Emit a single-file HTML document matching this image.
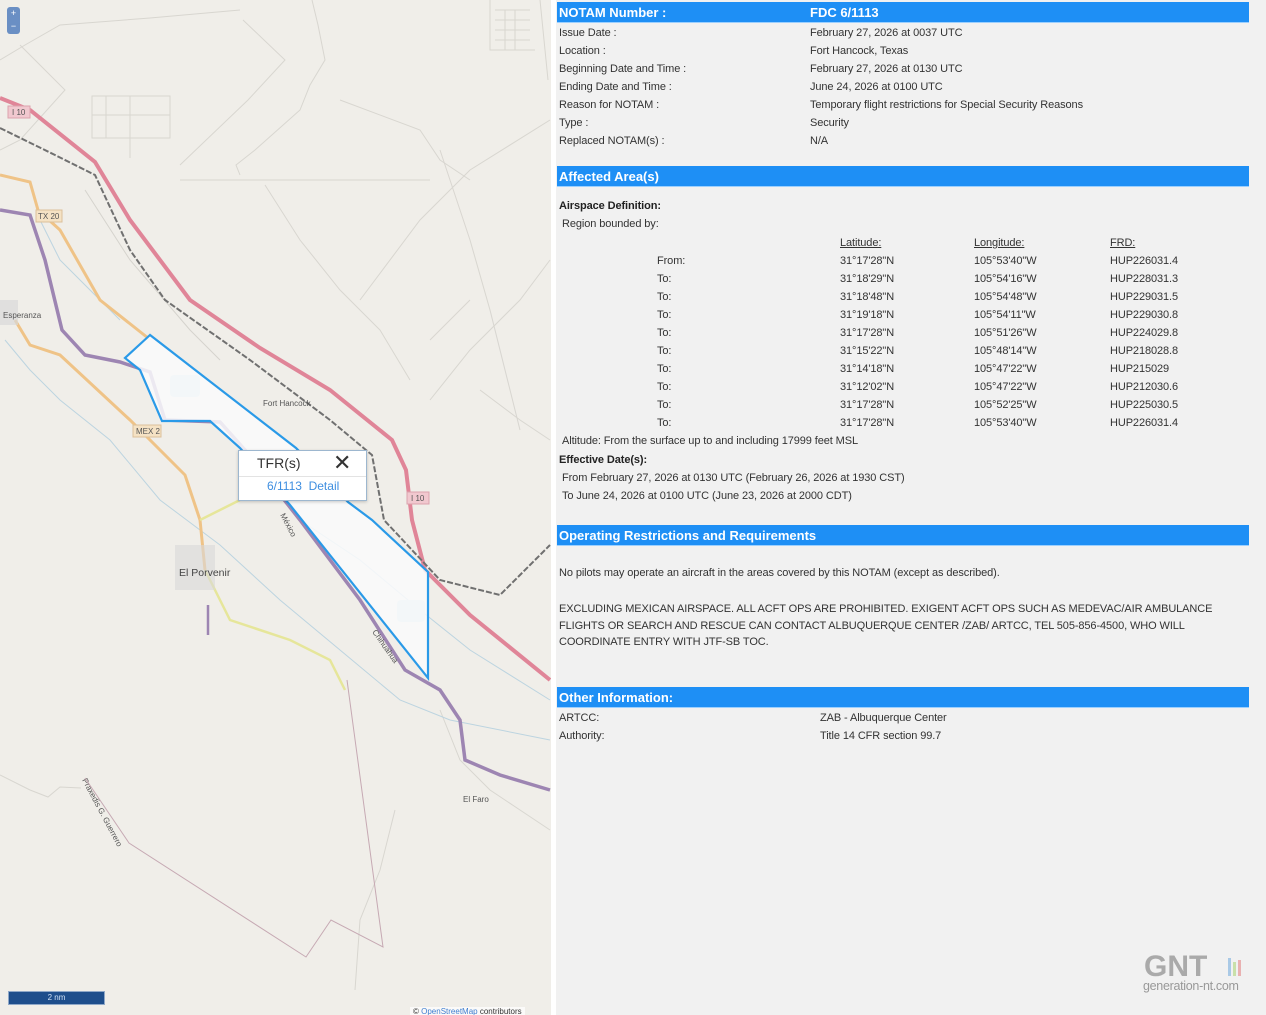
<!DOCTYPE html>
<html><head><meta charset="utf-8"><style>
*{margin:0;padding:0;box-sizing:border-box}
body{width:1266px;height:1015px;overflow:hidden;background:#f1f1f1;font-family:"Liberation Sans",sans-serif;position:relative}
#map{position:absolute;left:0;top:0;width:551px;height:1015px;background:#f0eee9;overflow:hidden}
#div{position:absolute;left:551px;top:0;width:5px;height:1015px;background:#fff}
.t{position:absolute;font-size:11px;color:#333;white-space:nowrap;letter-spacing:-0.1px;margin-top:1px}
.bar{position:absolute;left:557px;width:692px;height:21px;background:#1e8ff5;color:#fff;font-weight:bold;font-size:13px;line-height:21px;padding-left:2px;border-bottom:1px solid #9cd0ff}
.b{font-weight:bold;color:#222}
.u{text-decoration:underline}
</style></head><body>
<div id="map">
<svg width="551" height="1015" viewBox="0 0 551 1015" xmlns="http://www.w3.org/2000/svg">
<g fill="none" stroke="#d8d6d0" stroke-width="1">
<path d="M0 60 L25 45 L60 25 L150 18 L240 10"/>
<path d="M20 45 L65 90 L20 140 L0 150"/>
<path d="M92 96 H170 V138 H92 Z M92 115 H170 M106 96 V138 M130 96 V158"/>
<path d="M243 20 L285 60 L248 100 L180 165"/>
<path d="M312 0 L318 25 L325 60 L310 85 L300 110 L255 150 L236 165 L240 175"/>
<path d="M180 180 L430 180 M340 100 L420 130 L440 160 L470 180"/>
<path d="M265 185 L300 240 L340 290 L380 330 L410 380"/>
<path d="M550 120 L470 170 L420 220 L360 300 M440 150 L470 240 L490 310 L520 430"/>
<path d="M490 0 V50 H535 M495 10 H530 M495 20 H530 M495 30 H530 M495 40 H530 M505 10 V50 M515 10 V50"/>
<path d="M540 0 L548 80"/>
<path d="M430 400 L470 350 L520 300 L550 260"/>
<path d="M430 340 L470 300 M480 390 L520 420 L550 440"/>
<path d="M0 775 L30 790 L48 797 L60 787 L81 788"/>
<path d="M395 810 L380 870 L360 920 L355 990"/>
<path d="M440 710 L460 760 L490 790 L520 810 L550 830"/>
</g>
<path d="M85 190 L130 260 L190 330 L220 360" stroke="#d5d3cd" fill="none"/>
<g fill="none" stroke="#bcd4e0" stroke-width="1">
<path d="M5 340 L30 370 L60 400 L110 440 L160 500 L220 545 L280 600 L340 650 L400 700 L450 720 L550 740"/>
<path d="M40 220 L60 260 L100 300 L120 320"/>
<path d="M300 520 L360 560 L420 610 L470 650 L550 700"/>
</g>
<path d="M0 98 L30 110 L95 162 L130 220 L190 300 L260 348 L330 390 L392 440 L406 470 L412 520 L425 570 L470 615 L550 680" stroke="#e08598" stroke-width="4" fill="none"/>
<path d="M0 128 L55 155 L95 175 L130 250 L165 300 L250 360 L330 420 L372 455 L384 520 L440 580 L500 595 L530 565 L550 545" stroke="#707070" stroke-width="2" stroke-dasharray="6 2" fill="none"/>
<path d="M0 175 L30 182 L38 210 L60 230 L100 300 L148 338" stroke="#efc387" stroke-width="3" fill="none"/>
<path d="M15 320 L30 345 L60 355 L130 420 L185 475 L200 520 L205 570" stroke="#efc387" stroke-width="3" fill="none"/>
<path d="M205 570 L230 620 L290 640 L330 660 L345 690" stroke="#e6e69a" stroke-width="2.5" fill="none"/>
<path d="M200 520 L240 500" stroke="#e6e69a" stroke-width="2.5" fill="none"/>
<path d="M0 210 L30 215 L45 260 L62 330 L85 355 L120 362 L150 372 L165 420 L220 422 L245 450 L300 520 L360 600 L405 670 L440 690 L460 720 L465 760 L500 775 L550 790" stroke="#9d85b2" stroke-width="3.5" fill="none"/>
<path d="M208 605 V635" stroke="#9d85b2" stroke-width="2.5"/>
<rect x="170" y="375" width="30" height="22" fill="#c9e2ec" rx="4"/>
<rect x="397" y="600" width="28" height="22" fill="#c9e2ec" rx="4"/>
<rect x="175" y="545" width="40" height="45" fill="#d9d9d9" opacity=".6"/>
<rect x="0" y="300" width="18" height="25" fill="#d9d9d9" opacity=".7"/>
<path d="M150 335 L125 358 L140 370 L162 421 L210 421 L240 448 L290 505 L428 678 L428 572 L372 520 L348 502 L296 448 Z" fill="#fafafb" fill-opacity=".85" stroke="#2a9ae8" stroke-width="2.2"/>
<g font-family="Liberation Sans,sans-serif" fill="#555">
<text x="3" y="318" font-size="8">Esperanza</text>
<text x="263" y="406" font-size="8">Fort Hancock</text>
<text x="179" y="576" font-size="10.5" fill="#444">El Porvenir</text>
<text x="463" y="802" font-size="8">El Faro</text>
<text font-size="8" transform="translate(280,515) rotate(62)">México</text>
<text font-size="8" transform="translate(372,632) rotate(55)">Chihuahua</text>
<text font-size="8" transform="translate(82,780) rotate(62)">Praxedis G. Guerrero</text>
</g>
<g font-family="Liberation Sans,sans-serif" font-size="8" fill="#555">
<rect x="8" y="106" width="22" height="12" fill="#f1c8cf" stroke="#dba2ad"/><text x="12" y="115">I 10</text>
<rect x="36" y="210" width="26" height="12" fill="#f5e2c4" stroke="#dcc09a"/><text x="38" y="219">TX 20</text>
<rect x="133" y="425" width="28" height="12" fill="#f5e2c4" stroke="#dcc09a"/><text x="136" y="434">MEX 2</text>
<rect x="407" y="492" width="22" height="12" fill="#f1c8cf" stroke="#dba2ad"/><text x="411" y="501">I 10</text>
</g>
<path d="M85 778 L129 843 L306 957 L331 920 L383 947 L347 680" stroke="#c6a9b3" fill="none"/>
</svg>
<div style="position:absolute;left:7px;top:7px;width:13px;height:27px;background:#6a8fc4;border-radius:3px;color:#fff;font-size:9px;text-align:center;line-height:13px">+<br>−</div>
<div style="position:absolute;left:238px;top:450px;width:129px;height:51px;background:#fff;border:1px solid #9db7cf;box-shadow:0 1px 3px rgba(0,0,0,.2)">
<div style="position:absolute;left:18px;top:4px;font-size:14px;color:#333">TFR(s)</div>
<div style="position:absolute;left:94px;top:0px;font-size:22px;color:#333;line-height:24px">✕</div>
<div style="position:absolute;left:0;top:25px;width:127px;border-top:1px solid #e3e3e3"></div>
<div style="position:absolute;left:28px;top:28px;font-size:12px;color:#3e8ee0">6/1113&nbsp; Detail</div>
</div>
<div style="position:absolute;left:8px;top:991px;width:97px;height:14px;background:#1e4e8c;border:1px solid #8fa8c8;color:#cfe0f5;font-size:8px;text-align:center;line-height:12px">2 nm</div>
<div style="position:absolute;left:410px;top:1007px;font-size:8px;color:#333;background:rgba(255,255,255,.7);padding:0 3px">© <span style="color:#3e7ed0">OpenStreetMap</span> contributors</div>
</div>
<div id="div"></div>

<div class="bar" style="top:2px">NOTAM Number :<span style="position:absolute;left:253px">FDC 6/1113</span></div>
<div class="t" style="left:559px;top:26px">Issue Date :</div><div class="t" style="left:810px;top:26px">February 27, 2026 at 0037 UTC</div>
<div class="t" style="left:559px;top:44px">Location :</div><div class="t" style="left:810px;top:44px">Fort Hancock, Texas</div>
<div class="t" style="left:559px;top:62px">Beginning Date and Time :</div><div class="t" style="left:810px;top:62px">February 27, 2026 at 0130 UTC</div>
<div class="t" style="left:559px;top:80px">Ending Date and Time :</div><div class="t" style="left:810px;top:80px">June 24, 2026 at 0100 UTC</div>
<div class="t" style="left:559px;top:98px">Reason for NOTAM :</div><div class="t" style="left:810px;top:98px">Temporary flight restrictions for Special Security Reasons</div>
<div class="t" style="left:559px;top:116px">Type :</div><div class="t" style="left:810px;top:116px">Security</div>
<div class="t" style="left:559px;top:134px">Replaced NOTAM(s) :</div><div class="t" style="left:810px;top:134px">N/A</div>

<div class="bar" style="top:166px">Affected Area(s)</div>
<div class="t b" style="left:559px;top:199px">Airspace Definition:</div>
<div class="t" style="left:562px;top:217px">Region bounded by:</div>
<div class="t u" style="left:840px;top:236px">Latitude:</div><div class="t u" style="left:974px;top:236px">Longitude:</div><div class="t u" style="left:1110px;top:236px">FRD:</div>
<div class="t" style="left:657px;top:254px">From:</div><div class="t" style="left:840px;top:254px">31°17'28"N</div><div class="t" style="left:974px;top:254px">105°53'40"W</div><div class="t" style="left:1110px;top:254px">HUP226031.4</div>
<div class="t" style="left:657px;top:272px">To:</div><div class="t" style="left:840px;top:272px">31°18'29"N</div><div class="t" style="left:974px;top:272px">105°54'16"W</div><div class="t" style="left:1110px;top:272px">HUP228031.3</div>
<div class="t" style="left:657px;top:290px">To:</div><div class="t" style="left:840px;top:290px">31°18'48"N</div><div class="t" style="left:974px;top:290px">105°54'48"W</div><div class="t" style="left:1110px;top:290px">HUP229031.5</div>
<div class="t" style="left:657px;top:308px">To:</div><div class="t" style="left:840px;top:308px">31°19'18"N</div><div class="t" style="left:974px;top:308px">105°54'11"W</div><div class="t" style="left:1110px;top:308px">HUP229030.8</div>
<div class="t" style="left:657px;top:326px">To:</div><div class="t" style="left:840px;top:326px">31°17'28"N</div><div class="t" style="left:974px;top:326px">105°51'26"W</div><div class="t" style="left:1110px;top:326px">HUP224029.8</div>
<div class="t" style="left:657px;top:344px">To:</div><div class="t" style="left:840px;top:344px">31°15'22"N</div><div class="t" style="left:974px;top:344px">105°48'14"W</div><div class="t" style="left:1110px;top:344px">HUP218028.8</div>
<div class="t" style="left:657px;top:362px">To:</div><div class="t" style="left:840px;top:362px">31°14'18"N</div><div class="t" style="left:974px;top:362px">105°47'22"W</div><div class="t" style="left:1110px;top:362px">HUP215029</div>
<div class="t" style="left:657px;top:380px">To:</div><div class="t" style="left:840px;top:380px">31°12'02"N</div><div class="t" style="left:974px;top:380px">105°47'22"W</div><div class="t" style="left:1110px;top:380px">HUP212030.6</div>
<div class="t" style="left:657px;top:398px">To:</div><div class="t" style="left:840px;top:398px">31°17'28"N</div><div class="t" style="left:974px;top:398px">105°52'25"W</div><div class="t" style="left:1110px;top:398px">HUP225030.5</div>
<div class="t" style="left:657px;top:416px">To:</div><div class="t" style="left:840px;top:416px">31°17'28"N</div><div class="t" style="left:974px;top:416px">105°53'40"W</div><div class="t" style="left:1110px;top:416px">HUP226031.4</div>
<div class="t" style="left:562px;top:434px">Altitude: From the surface up to and including 17999 feet MSL</div>
<div class="t b" style="left:559px;top:453px">Effective Date(s):</div>
<div class="t" style="left:562px;top:471px">From February 27, 2026 at 0130 UTC (February 26, 2026 at 1930 CST)</div>
<div class="t" style="left:562px;top:489px">To June 24, 2026 at 0100 UTC (June 23, 2026 at 2000 CDT)</div>

<div class="bar" style="top:525px">Operating Restrictions and Requirements</div>
<div class="t" style="left:559px;top:566px">No pilots may operate an aircraft in the areas covered by this NOTAM (except as described).</div>
<div class="t" style="left:559px;top:600px;line-height:16.5px">EXCLUDING MEXICAN AIRSPACE. ALL ACFT OPS ARE PROHIBITED. EXIGENT ACFT OPS SUCH AS MEDEVAC/AIR AMBULANCE<br>FLIGHTS OR SEARCH AND RESCUE CAN CONTACT ALBUQUERQUE CENTER /ZAB/ ARTCC, TEL 505-856-4500, WHO WILL<br>COORDINATE ENTRY WITH JTF-SB TOC.</div>

<div class="bar" style="top:687px">Other Information:</div>
<div class="t" style="left:559px;top:711px">ARTCC:</div><div class="t" style="left:820px;top:711px">ZAB - Albuquerque Center</div>
<div class="t" style="left:559px;top:729px">Authority:</div><div class="t" style="left:820px;top:729px">Title 14 CFR section 99.7</div>

<div style="position:absolute;left:1144px;top:950px;font-size:30px;font-weight:bold;color:#aaa;letter-spacing:0px">GNT</div>
<div style="position:absolute;left:1228px;top:958px;width:3px;height:18px;background:#a9c9e6"></div>
<div style="position:absolute;left:1233px;top:962px;width:3px;height:14px;background:#c9e0a9"></div>
<div style="position:absolute;left:1238px;top:960px;width:3px;height:16px;background:#e9b1b1"></div>
<div style="position:absolute;left:1143px;top:979px;font-size:12.5px;color:#999;letter-spacing:-0.3px">generation-nt.com</div>
</body></html>
